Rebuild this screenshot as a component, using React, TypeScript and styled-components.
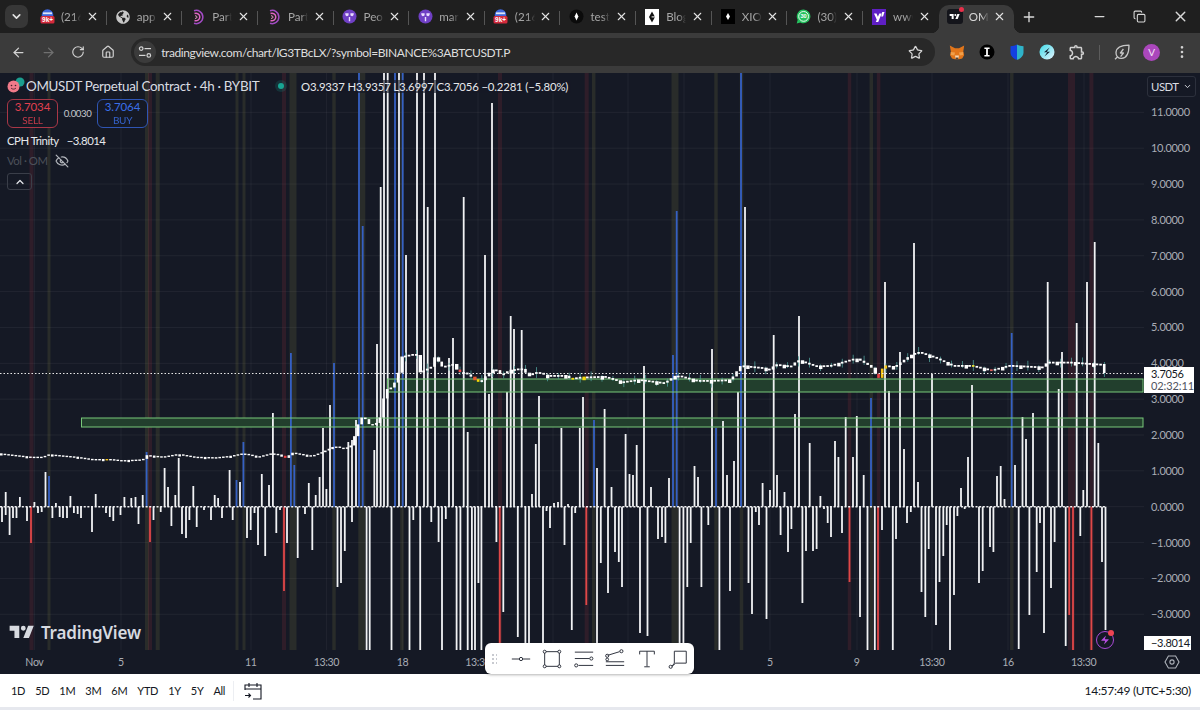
import React from "react";
import styled, { createGlobalStyle } from "styled-components";
import {
  ArrowLeft,
  ArrowRight,
  ChevronDown,
  ChevronUp,
  Copy,
  EllipsisVertical,
  EyeOff,
  House,
  Minus,
  Plus,
  RotateCw,
  Star,
  X,
  Zap,
} from "lucide-react";
import { FaGlobeAmericas } from "react-icons/fa";
import { MdOutlineExtension } from "react-icons/md";

type Bar = [number, number];

const WHITE = "#f1f2f4";
const BLUE = "#3560c4";
const RED = "#e04848";
const OLIVE = "rgba(112,112,62,0.22)";
const WINE = "rgba(120,44,56,0.26)";
const OFF = 60;
const BASE = 506.7;
const STEP = 35.85;

const upWhite: Bar[] = [
  [5.7, 492], [19.9, 497], [34.4, 502], [45.5, 472], [55.9, 503], [70.4, 496], [95.7, 494], [124.4, 497],
  [131.3, 498], [135.5, 497], [142.7, 495], [164.6, 468], [168, 487], [175.3, 495], [178.7, 458], [193.3, 486],
  [214.7, 495], [218.1, 498], [229.6, 470], [240, 482], [261.8, 474], [269, 485], [272.9, 413], [308.8, 483],
  [315.7, 495], [319.6, 477], [323, 428], [326.4, 489], [330, 405], [348.3, 442], [352, 440], [356, 420],
  [374.3, 450], [377, 344], [380.7, 187], [384, OFF], [387.7, OFF], [399, OFF], [406, 255], [417, OFF],
  [424, OFF], [427.7, 207], [435, OFF], [449, 358], [453, 338], [463.7, 197], [467.7, 432], [485, 255],
  [489, 394], [492, 103], [507, 392], [510.7, 316], [514, 329], [521.7, 330], [532, 494], [535.8, 444],
  [539, 396], [554, 503], [558, 502], [561.4, 428], [568, 504], [579.8, 428], [583, 397], [597, 468],
  [604.6, 409], [611.5, 487], [625.6, 434], [629.5, 474], [633, 475], [636.7, 445], [644, 366], [651, 487],
  [669, 478], [694.5, 466], [698, 477], [712, 349], [723, 421], [727, 475], [734, 461], [738, 392],
  [745, 207], [762.6, 483], [770, 490], [773.7, 335], [777, 475], [784.5, 492], [795, 414], [799, 316],
  [809.7, 443], [820.4, 496], [835, 441], [838.4, 457], [845.7, 417], [853, 457], [856.8, 416], [863.7, 475],
  [885, 282], [889, 391], [900, 352], [904, 449], [914, 243], [918, 482], [932, 374], [961, 488],
  [968, 457], [972, 385], [997, 476], [1000.7, 466], [1004.5, 499], [1015, 465], [1022.5, 417], [1026, 439],
  [1033, 413], [1047.7, 282], [1058.7, 389], [1062, 352], [1076.7, 323], [1083.3, 490], [1087, 282],
  [1094.7, 242], [1098.3, 443],
];

const upBlue: Bar[] = [
  [49, 476], [146.6, 452], [236.5, 480], [243.4, 442], [290.9, 353], [294.3, 465], [334, 363], [359, OFF],
  [362.7, 226], [395, OFF], [402.7, OFF], [594, 420], [673, 355], [676.7, 211], [716, 428], [741, OFF],
  [871, 398], [1011.7, 333],
];

const downWhite: Bar[] = [
  [2, 522], [5.7, 515], [9.6, 535], [13, 518], [16.5, 518], [27, 521], [38, 513], [41.7, 512],
  [52.4, 518], [59.7, 517], [63, 518], [67, 518], [73.9, 513], [77.7, 514], [81, 518], [92, 532],
  [106, 513], [109.8, 517], [113.3, 521], [120.5, 515], [138.5, 524], [153.5, 520], [160.7, 512], [171.4, 526],
  [182, 534], [186, 538], [189.4, 520], [196.7, 527], [204, 510], [211, 520], [222, 518], [232.7, 520],
  [247, 538], [250.7, 530], [254.5, 513], [258, 545], [265.2, 556], [276.3, 533], [280, 510], [287, 543],
  [297.7, 558], [305, 514], [312.3, 550], [337.5, 587], [341, 583], [344.8, 551], [352, 522], [366.6, 660],
  [369.7, 660], [391.5, 660], [409.5, 660], [413.3, 520], [420.2, 660], [431.3, 522], [438.6, 542], [442, 660],
  [445.8, 519], [456.6, 660], [460.4, 660], [467.7, 660], [471.9, 660], [475, 660], [478.4, 583], [481.4, 660],
  [496.4, 542], [503.3, 612], [517.8, 637], [525.4, 660], [529, 660], [543, 660], [546.5, 511], [550, 528],
  [564.5, 545], [571.8, 630], [575.2, 513], [597, 660], [600.8, 563], [608, 593], [615, 552], [618.8, 562],
  [622, 587], [640, 633], [647.5, 636], [658, 539], [662, 537], [665.4, 543], [679.6, 660], [683.4, 660],
  [687.3, 587], [690.7, 543], [701.4, 587], [708.3, 525], [719.4, 660], [730, 591], [748.5, 583], [752, 614],
  [755.8, 512], [759, 525], [766.5, 619], [780.6, 535], [788, 552], [791.4, 529], [802.4, 603], [806, 551],
  [813, 551], [816.6, 549], [824, 509], [827.7, 523], [831, 537], [842, 533], [860, 617], [867.5, 660],
  [874.8, 660], [882, 530], [892.8, 660], [896, 539], [907, 523], [910.8, 512], [921.5, 592], [925.3, 617],
  [928.7, 549], [936, 625], [939.5, 582], [943.3, 556], [946.7, 525], [950, 660], [954, 595], [957.4, 516],
  [964.7, 509], [979, 583], [982.7, 571], [990, 547], [993.4, 552], [1018.7, 649], [1029.4, 615], [1036.7, 572],
  [1040, 523], [1044, 633], [1051, 588], [1054.6, 542], [1065.7, 646], [1080.3, 536], [1102, 562], [1105.5, 630],
];

const downRed: Bar[] = [
  [31, 543], [150, 542], [284, 591], [499.8, 660], [586.3, 605], [849.5, 582], [878, 660], [1069.2, 615],
  [1073, 660], [1091.4, 660],
];

const bands: [number, number, string][] = [
  [31.5, 4, WINE], [49, 3, OLIVE], [147, 4, OLIVE], [150, 4, WINE], [157.7, 4, OLIVE], [237, 3, OLIVE],
  [244, 3, OLIVE], [284, 4, WINE], [293, 7, OLIVE], [334, 3.5, OLIVE], [361.8, 7, OLIVE], [402, 3.5, OLIVE],
  [500, 4, WINE], [586.7, 4, WINE], [593.7, 3.5, OLIVE], [675, 7, OLIVE], [716, 3.5, OLIVE], [741.5, 3.5, OLIVE],
  [849.5, 3.5, WINE], [871.3, 3.5, OLIVE], [878.6, 3.5, WINE], [1011.8, 3.5, OLIVE], [1071.5, 7, WINE],
  [1091.4, 4, WINE],
];

const gridX = [34.4, 121, 251, 326.4, 402.6, 478, 553, 628, 684, 770, 857, 932, 1008, 1084];
const priceTicks = ["11.0000", "10.0000", "9.0000", "8.0000", "7.0000", "6.0000", "5.0000", "4.0000", "3.0000", "2.0000", "1.0000", "0.0000", "−1.0000", "−2.0000", "−3.0000"];
const timeTicks: [string, number][] = [["Nov", 34.4], ["5", 121], ["11", 250.7], ["13:30", 326.4], ["18", 402.6], ["13:30", 478], ["5", 770], ["9", 856.6], ["13:30", 932], ["16", 1008], ["13:30", 1083.8]];
const ranges = ["1D", "5D", "1M", "3M", "6M", "YTD", "1Y", "5Y", "All"];

const path: Bar[] = [
  [0, 453.3], [15, 455], [30.6, 456.7], [46, 456.7], [49.8, 454.3], [76.5, 456.7], [92, 459], [111, 459], [122.5, 460.3],
  [145.4, 459.3], [147.3, 455], [164.6, 456.7], [180, 454], [195, 456.7], [218, 457.3], [233.4, 455.7], [245, 453.3],
  [260, 456.7], [273.6, 453.3], [283, 455], [287, 458.3], [294.7, 452.7], [313.8, 456], [325.3, 451.7], [336.8, 446],
  [346.3, 449], [354, 445], [361.7, 420], [365.5, 416], [371, 424], [377, 425.3], [382.7, 416.7], [387.3, 390],
  [395, 386.7], [400, 375], [403.3, 356.7], [410, 355], [418.3, 353.3], [421.7, 372.7], [433.3, 366.7], [437.3, 356],
  [443.3, 366.7], [455, 364], [460, 371.7], [466.7, 372.7], [473.3, 376.7], [481.7, 382.7], [490, 374], [496.7, 368],
  [503.3, 375], [511.7, 370], [523.3, 368], [530, 375], [540, 371.7], [546.7, 375], [566.7, 375], [571.7, 378.3],
  [583.3, 376.7], [605, 376], [623.3, 381.7], [640, 379.3], [666.7, 382.7], [678.3, 375], [696.7, 380], [713.3, 380],
  [733.3, 379.3], [743.3, 365], [750, 366], [763, 367.3], [773.3, 370], [776.7, 364], [793, 366], [800, 360],
  [816.7, 365.7], [833, 365], [858, 358], [873, 366.7], [878, 375], [883, 380], [885, 365], [896.7, 366.7], [913, 355],
  [920, 351.7], [935, 356.7], [953, 365], [971.7, 365], [993, 370], [1011.7, 365], [1045, 366.7], [1050, 361.7],
  [1070, 361.7], [1093, 363.3], [1103, 364], [1106, 373],
];

const candleColors: [number, number, string][] = [
  [106, 110, "#f5c518"], [282, 286, "#ef4444"], [458, 463, "#ef4444"], [472, 476, "#e8592f"], [477, 481, "#f5d90a"],
  [570, 574, "#f5d90a"], [581, 586, "#f5d90a"], [876, 880, "#ef4444"], [882, 887, "#f5c518"], [970, 974, "#e6e03a"],
  [991, 995, "#e0605c"],
];

const priceAt = (x: number) => {
  for (let i = 1; i < path.length; i++) {
    if (x <= path[i][0]) {
      const [x0, y0] = path[i - 1];
      const [x1, y1] = path[i];
      return y0 + ((y1 - y0) * (x - x0)) / (x1 - x0 || 1);
    }
  }
  return path[path.length - 1][1];
};

const Candles = () => {
  const items = [];
  const gap = 3.64;
  for (let i = 0; i * gap < 1104; i++) {
    const x = i * gap;
    const a = priceAt(x);
    const b = priceAt(x + gap);
    const top = Math.min(a, b);
    const late = x > 385;
    const minTall = late ? (i % 5 === 0 ? 3.6 : 1.8) : i % 7 === 0 ? 2.2 : 1.4;
    const tall = Math.max(Math.abs(a - b), minTall);
    const tint = candleColors.find((c) => x + 1.5 >= c[0] && x + 1.5 <= c[1]);
    const hasWick = late && i % 3 === 0;
    items.push(
      <g key={i}>
        {hasWick && <rect x={x + 1} y={top - ((i * 37) % 5) - 1} width={0.8} height={tall + ((i * 37) % 5) + 2 + (i % 4)} fill="#4f9d98" />}
        <rect x={x} y={top} width={late && i % 5 === 0 ? 3.4 : 2.6} height={tall} fill={tint ? tint[2] : "#ffffff"} />
      </g>
    );
  }
  return <g>{items}</g>;
};

const Bars = ({ list, up, color }: { list: Bar[]; up: boolean; color: string }) => (
  <g>
    {list.map(([x, end]) => (
      <rect key={x} x={x - 0.9} y={up ? end : BASE} width={1.8} height={up ? BASE - end : end - BASE} fill={color} />
    ))}
  </g>
);

const Chart = () => (
  <ChartSvg viewBox="0 73 1144 577" width="1144" height="577">
    {priceTicks.map((_, i) => (
      <line key={i} x1="0" x2="1144" y1={BASE - STEP * (11 - i)} y2={BASE - STEP * (11 - i)} stroke="rgba(255,255,255,0.055)" />
    ))}
    {gridX.map((x) => (
      <line key={x} x1={x} x2={x} y1="73" y2="650" stroke="rgba(255,255,255,0.05)" />
    ))}
    {bands.map(([x, w, c]) => (
      <rect key={x + c} x={x - w / 2} y="73" width={w} height="577" fill={c} />
    ))}
    <rect x="387" y="379" width="756" height="13" fill="#223f2d" />
    <rect x="81.5" y="418" width="1061.5" height="9" fill="#223f2d" />
    <Bars list={upWhite} up color={WHITE} />
    <Bars list={upBlue} up color={BLUE} />
    <Bars list={downWhite} up={false} color={WHITE} />
    <Bars list={downRed} up={false} color={RED} />
    <line x1="0" x2="1105" y1={BASE} y2={BASE} stroke={WHITE} strokeWidth="1.6" strokeDasharray="2 1.64" />
    <rect x="387.5" y="379" width="755.5" height="13" fill="none" stroke="#79c97a" />
    <rect x="81.5" y="418" width="1061.5" height="9" fill="none" stroke="#79c97a" />
    <Candles />
    <line x1="0" x2="1144" y1="373.5" y2="373.5" stroke="#e8e8e8" strokeDasharray="1.5 2" />
  </ChartSvg>
);

const TvMark = ({ color, size }: { color: string; size: number }) => (
  <svg width={size} height={(size * 28) / 36} viewBox="0 0 36 28" fill={color}>
    <path d="M14 6H2v6h6v9h6V6Zm12 15h-7l6-15h7l-6 15Zm-7-9a3 3 0 1 0 0-6 3 3 0 0 0 0 6Z" />
  </svg>
);

const Favicon = ({ kind }: { kind: string }) => {
  switch (kind) {
    case "mail":
      return (
        <svg width="15" height="15" viewBox="0 0 15 15">
          <circle cx="7.5" cy="6" r="5.8" fill="#3f67dc" />
          <rect x="3" y="3.4" width="9" height="1.8" fill="#dfe6f7" />
          <rect x="0.5" y="7" width="14" height="7.5" rx="1.5" fill="#d42a3c" />
          <FavText x="7.5" y="13" fontSize="6.4">9k+</FavText>
        </svg>
      );
    case "globe":
      return <FaGlobeAmericas size={14} color="#c7c7c7" />;
    case "moon":
      return (
        <svg width="16" height="16" viewBox="0 0 16 16" fill="none">
          <path d="M4 1.8A6.6 6.6 0 1 1 4 14.2" stroke="#a24bc4" strokeWidth="1.5" />
          <path d="M4.5 4.5A3.8 3.8 0 1 1 4.5 11.5" stroke="#e067c4" strokeWidth="1.5" />
          <path d="M5 7A1.3 1.3 0 1 1 5 9.2" stroke="#f09ad0" strokeWidth="1" />
        </svg>
      );
    case "trio":
      return (
        <svg width="15" height="15" viewBox="0 0 15 15">
          <circle cx="7.5" cy="7.5" r="7" fill="#6f3fc4" />
          <path d="M3.2 4.2h3.4v1.6c0 1-.9 1.4-1.7 1.4S3.2 6 3.2 4.2ZM11.8 4.2H8.4v1.6c0 1 .9 1.4 1.7 1.4s1.7-1.2 1.7-3ZM6.8 8h1.4v4.2H6.8Z" fill="#eadcff" />
        </svg>
      );
    case "dot":
      return (
        <svg width="15" height="15" viewBox="0 0 15 15">
          <circle cx="7.5" cy="7.5" r="7" fill="#0b0b0b" />
          <path d="M7.5 3.4 9.4 7.5 7.5 11.6 5.6 7.5Z" fill="#fff" />
        </svg>
      );
    case "paper":
      return (
        <svg width="14" height="16" viewBox="0 0 14 16">
          <rect width="14" height="16" fill="#fff" />
          <path d="M7 2.5 10 8l-3 5.5L4 8Z" fill="#111" />
          <rect x="6.6" y="7.4" width="4" height="1" fill="#fff" />
        </svg>
      );
    case "ink":
      return (
        <svg width="14" height="15" viewBox="0 0 14 15">
          <rect width="14" height="15" fill="#000" />
          <path d="M7 4 9 7.5 7 11 5 7.5Z" fill="#fff" />
        </svg>
      );
    case "chat":
      return (
        <svg width="15" height="15" viewBox="0 0 15 15">
          <path d="M7.6.6a6.8 6.8 0 0 0-5.9 10.2L.7 14.4l3.7-1A6.8 6.8 0 1 0 7.6.6Z" fill="#25c25f" />
          <circle cx="7.6" cy="7.4" r="4.9" fill="none" stroke="#fff" strokeWidth="0.9" />
          <FavText x="7.6" y="9.4" fontSize="5.6">30</FavText>
        </svg>
      );
    case "yahoo":
      return (
        <svg width="14" height="16" viewBox="0 0 14 16">
          <rect width="14" height="16" fill="#5f1fc4" />
          <path d="M2 4.6h2.5l1.4 3.2 1.4-3.2h2.4L6.2 13H3.8l1-2.3Z" fill="#fff" />
          <path d="M10.2 3h2.3l-1.5 4.4H9.2Z" fill="#fff" />
        </svg>
      );
    default:
      return (
        <TvFavicon>
          <TvMark color="#fff" size={12} />
          <TvAlert />
        </TvFavicon>
      );
  }
};

const tabs = [
  { kind: "mail", title: "(216" },
  { kind: "globe", title: "app" },
  { kind: "moon", title: "Part" },
  { kind: "moon", title: "Part" },
  { kind: "trio", title: "Peo" },
  { kind: "trio", title: "mar" },
  { kind: "mail", title: "(216" },
  { kind: "dot", title: "test" },
  { kind: "paper", title: "Blog" },
  { kind: "ink", title: "XIO" },
  { kind: "chat", title: "(30)" },
  { kind: "yahoo", title: "www" },
  { kind: "tv", title: "OM" },
];

const TuneIcon = () => (
  <svg width="14" height="14" viewBox="0 0 14 14" fill="none" stroke="#d6d6d6" strokeWidth="1.2">
    <circle cx="3.2" cy="3.6" r="1.8" />
    <path d="M6.5 3.6H13" />
    <circle cx="10.8" cy="10.4" r="1.8" />
    <path d="M1 10.4h6.5" />
  </svg>
);

const FoxIcon = () => (
  <svg width="16" height="15" viewBox="0 0 16 15">
    <path d="M.8.6 6 3.2h4L15.2.6l-.9 6 .9 3.4-2 3.4-3 .9H6l-3-.9-2-3.4.9-3.4Z" fill="#e2761b" />
    <path d="M1.8 7 6 7.6l-.6 3-3.4-.6ZM14.2 7 10 7.6l.6 3 3.4-.6Z" fill="#f0a04b" />
    <path d="M6 10.6h4l-.6 3H6.6Z" fill="#f6d9b8" />
    <path d="M6.8 12.6h2.4v1.2H6.8Z" fill="#2b2b2b" />
  </svg>
);

const BeamIcon = () => (
  <svg width="16" height="16" viewBox="0 0 16 16">
    <circle cx="8" cy="8" r="7.5" fill="#000" />
    <path d="M5.4 3.4h5.2v1.5H8.9v6.2h1.7v1.5H5.4v-1.5h1.7V4.9H5.4Z" fill="#fff" />
  </svg>
);

const ShieldIcon = () => (
  <svg width="14" height="16" viewBox="0 0 14 16">
    <path d="M7 .5c2 1.2 4 1.6 6.5 1.7v6.2C13.5 12 10.5 14.6 7 15.8Z" fill="#2fb3c9" />
    <path d="M7 .5C5 1.7 3 2.1.5 2.2v6.2C.5 12 3.5 14.6 7 15.8Z" fill="#1440e0" />
  </svg>
);

const SwirlIcon = () => (
  <svg width="16" height="16" viewBox="0 0 16 16">
    <defs>
      <linearGradient id="swirl" x1="0" y1="0" x2="1" y2="1">
        <stop offset="0" stopColor="#3ddbe8" />
        <stop offset="1" stopColor="#e8f4ff" />
      </linearGradient>
    </defs>
    <circle cx="8" cy="8" r="7.5" fill="url(#swirl)" />
    <path d="M10.6 3.4 5 8.2h3.2l-2.8 4.4 5.6-4.8H7.8Z" fill="#102030" />
  </svg>
);

const LeafIcon = () => (
  <svg width="18" height="18" viewBox="0 0 18 18" fill="none" stroke="#c7c7c7" strokeWidth="1.3" strokeLinejoin="round">
    <path d="M16 2.2C9 2.2 3.4 3.6 3 9.6c-.1 2 .6 3.4 1.6 4.4 1 1 2.4 1.5 4 1.4 5.8-.4 7.4-6.4 7.4-13.2Z" />
    <path d="M10.4 6 7.4 10h3l-2.8 3.6" />
    <path d="M4.4 14 2 16.2" />
  </svg>
);

const LineTool = () => (
  <ToolSvg viewBox="0 0 24 24">
    <path d="M2 12h8.2M13.8 12H22" />
    <circle cx="12" cy="12" r="1.8" />
  </ToolSvg>
);

const RectTool = () => (
  <ToolSvg viewBox="0 0 24 24">
    <path d="M4 5.5v13M20 5.5v13M5.5 4h13M5.5 20h13" />
    <circle cx="4" cy="4" r="1.6" />
    <circle cx="20" cy="4" r="1.6" />
    <circle cx="4" cy="20" r="1.6" />
    <circle cx="20" cy="20" r="1.6" />
  </ToolSvg>
);

const ChannelTool = () => (
  <ToolSvg viewBox="0 0 24 24">
    <path d="M2 4.5h20M2 11.5h16M6 19h16" />
    <circle cx="20" cy="11.5" r="1.7" />
    <circle cx="3.5" cy="19" r="1.7" />
  </ToolSvg>
);

const FibTool = () => (
  <ToolSvg viewBox="0 0 24 24">
    <path d="M4 8 17 4M2 15h20M2 19h20" />
    <circle cx="19" cy="3.5" r="1.7" />
    <circle cx="3.5" cy="8.5" r="1.7" />
    <circle cx="3.5" cy="12.5" r="1.5" />
  </ToolSvg>
);

const TextTool = () => (
  <ToolSvg viewBox="0 0 24 24">
    <path d="M4 7V3.5h16V7M12 3.5V20M9 20.5h6" />
  </ToolSvg>
);

const NoteTool = () => (
  <ToolSvg viewBox="0 0 24 24">
    <path d="M8 3.5h13v13H9.5L5.5 20 8 16.5V3.5Z" />
    <circle cx="4" cy="20.5" r="1.7" />
  </ToolSvg>
);

const CalendarIcon = () => (
  <svg width="18" height="20" viewBox="0 0 18 20" fill="none" stroke="#131722" strokeWidth="1.1">
    <path d="M1 9V4h16v14H9" />
    <path d="M1 8h16M5 2v4M13 2v4M1 14.5h5.5M4.5 12.5l2 2-2 2" />
  </svg>
);

const SettingsIcon = () => (
  <svg width="16" height="16" viewBox="0 0 16 16" fill="none" stroke="#aeb2ba" strokeWidth="1.1">
    <path d="M4.4 2h7.2L15 8l-3.4 6H4.4L1 8Z" />
    <circle cx="8" cy="8" r="2.1" />
  </svg>
);

const App: React.FC = () => {
  return (
    <Page>
      <GlobalStyle />
      <TabStrip>
        <TabMenuBtn>
          <ChevronDown size={13} strokeWidth={3} />
        </TabMenuBtn>
        {tabs.map((tab, index) => (
          <Tab key={index} $active={index === 12} $divider={index < 11}>
            <FaviconSlot>
              <Favicon kind={tab.kind} />
            </FaviconSlot>
            <TabTitle>{tab.title}</TabTitle>
            <TabClose>
              <X size={13} strokeWidth={2} />
            </TabClose>
          </Tab>
        ))}
        <NewTab>
          <Plus size={16} />
        </NewTab>
        <WindowControls>
          <Minus size={15} />
          <Copy size={13} />
          <X size={17} />
        </WindowControls>
      </TabStrip>

      <Toolbar>
        <ToolBtn>
          <ArrowLeft size={15} />
        </ToolBtn>
        <ToolBtn $dim>
          <ArrowRight size={15} />
        </ToolBtn>
        <ToolBtn>
          <RotateCw size={14} />
        </ToolBtn>
        <ToolBtn>
          <House size={14} />
        </ToolBtn>
        <Omnibox>
          <TuneBadge>
            <TuneIcon />
          </TuneBadge>
          <UrlText>tradingview.com/chart/lG3TBcLX/?symbol=BINANCE%3ABTCUSDT.P</UrlText>
          <Star size={15} color="#d6d6d6" />
        </Omnibox>
        <ToolBtn><FoxIcon /></ToolBtn>
        <ToolBtn><BeamIcon /></ToolBtn>
        <ToolBtn><ShieldIcon /></ToolBtn>
        <ToolBtn><SwirlIcon /></ToolBtn>
        <ToolBtn><MdOutlineExtension size={18} /></ToolBtn>
        <ToolDivider />
        <ToolBtn><LeafIcon /></ToolBtn>
        <ToolBtn><Avatar>V</Avatar></ToolBtn>
        <ToolBtn><EllipsisVertical size={16} /></ToolBtn>
      </Toolbar>

      <ChartArea>
        <ChartBody>
          <ChartPane>
            <Chart />
            <Legend>
              <LegendTitle>
                <SymbolBadge>
                  <svg width="18" height="16" viewBox="0 0 18 16">
                    <circle cx="13" cy="5" r="4.5" fill="#1b9e8f" />
                    <circle cx="6.5" cy="9.5" r="6" fill="#f07a8a" />
                    <circle cx="4.5" cy="8.5" r="0.8" fill="#40202a" />
                    <circle cx="8.5" cy="8.5" r="0.8" fill="#40202a" />
                    <path d="M4 11c1.2 1.5 3.8 1.5 5 0" stroke="#40202a" fill="none" strokeWidth="0.8" />
                  </svg>
                </SymbolBadge>
                <SymbolName>OMUSDT Perpetual Contract · 4h · BYBIT</SymbolName>
                <StatusDot />
                <Ohlc>O3.9337 H3.9357 L3.6997 C3.7056 −0.2281 (−5.80%)</Ohlc>
              </LegendTitle>
              <TradeRow>
                <TradeBtn $color="#e0404f" $border="#a93747">
                  <b>3.7034</b>
                  <span>SELL</span>
                </TradeBtn>
                <Spread>0.0030</Spread>
                <TradeBtn $color="#3a6fe8" $border="#2f55b4">
                  <b>3.7064</b>
                  <span>BUY</span>
                </TradeBtn>
              </TradeRow>
              <IndicatorRow>
                <span>CPH Trinity</span>
                <span>−3.8014</span>
              </IndicatorRow>
              <VolumeRow>
                <span>Vol · OM</span>
                <EyeOff size={14} color="#b4b7bd" />
              </VolumeRow>
              <CollapseBtn>
                <ChevronUp size={12} strokeWidth={2.4} />
              </CollapseBtn>
            </Legend>
            <Watermark>
              <TvMark color="#d7dae0" size={29} />
              <span>TradingView</span>
            </Watermark>
            <AlertBadge>
              <Zap size={10} fill="#b44ddd" strokeWidth={0} />
            </AlertBadge>
          </ChartPane>
          <PriceAxis>
            <CurrencyBtn>
              USDT
              <ChevronDown size={9} strokeWidth={2.5} />
            </CurrencyBtn>
            <PriceTicks>
              {priceTicks.map((tick) => (
                <PriceTick key={tick}>{tick}</PriceTick>
              ))}
            </PriceTicks>
            <LastPrice>
              <b>3.7056</b>
              <span>02:32:11</span>
            </LastPrice>
            <IndicatorPrice>−3.8014</IndicatorPrice>
          </PriceAxis>
        </ChartBody>
        <TimeRow>
          <TimeAxis>
            {timeTicks.map(([label, x], i) => (
              <TimeCell key={i} style={{ width: (timeTicks[i + 1]?.[1] ?? 1144) - x }}>
                <span>{label}</span>
              </TimeCell>
            ))}
          </TimeAxis>
          <AxisCorner>
            <SettingsIcon />
          </AxisCorner>
        </TimeRow>
        <DrawBar>
          <DragDots />
          <DrawTool><LineTool /></DrawTool>
          <DrawTool><RectTool /></DrawTool>
          <DrawTool><ChannelTool /></DrawTool>
          <DrawTool><FibTool /></DrawTool>
          <DrawTool><TextTool /></DrawTool>
          <DrawTool><NoteTool /></DrawTool>
        </DrawBar>
      </ChartArea>

      <BottomBar>
        <RangeList>
          {ranges.map((range) => (
            <RangeItem key={range}>{range}</RangeItem>
          ))}
        </RangeList>
        <RangeDivider />
        <CalendarBtn>
          <CalendarIcon />
        </CalendarBtn>
        <Clock>14:57:49 (UTC+5:30)</Clock>
      </BottomBar>
      <PageEdge />
    </Page>
  );
};

export default App;

const GlobalStyle = createGlobalStyle`
  html, body {
    margin: 0;
    padding: 0;
    background: #ffffff;
  }
  * {
    box-sizing: border-box;
  }
`;

const Page = styled.div`
  width: 1200px;
  height: 710px;
  display: flex;
  flex-direction: column;
  overflow: hidden;
  font-family: Lato, "Noto Sans", sans-serif;
`;

const TabStrip = styled.div`
  height: 33px;
  display: flex;
  align-items: flex-end;
  padding-left: 5px;
  background: #1f1f1f;
  color: #c7c7c7;
`;

const TabMenuBtn = styled.div`
  width: 23px;
  height: 23px;
  margin: 0 3px 5px 0;
  border-radius: 7px;
  background: #373737;
  display: flex;
  align-items: center;
  justify-content: center;
  color: #e3e3e3;
`;

const Tab = styled.div<{ $active: boolean; $divider: boolean }>`
  position: relative;
  width: 75.65px;
  height: 28px;
  display: flex;
  align-items: center;
  padding: 0 8px 5px 8px;
  border-radius: 10px 10px 0 0;
  background: ${(p) => (p.$active ? "#3b3b3b" : "transparent")};
  color: ${(p) => (p.$active ? "#d8d8d8" : "#a6a6a6")};
  &::after {
    content: "";
    position: absolute;
    right: 0;
    top: 6px;
    width: 1px;
    height: 14px;
    background: ${(p) => (p.$divider ? "#555555" : "transparent")};
  }
  ${(p) =>
    p.$active &&
    `&::before {
      content: "";
      position: absolute;
      left: -8px;
      right: -8px;
      bottom: 0;
      height: 8px;
      background:
        radial-gradient(circle at 0 0, #1f1f1f 8px, #3b3b3b 8.5px) left / 8px 8px no-repeat,
        radial-gradient(circle at 100% 0, #1f1f1f 8px, #3b3b3b 8.5px) right / 8px 8px no-repeat;
    }`}
`;

const FaviconSlot = styled.div`
  position: relative;
  width: 16px;
  height: 16px;
  flex: none;
  display: flex;
  align-items: center;
  justify-content: center;
`;

const FavText = styled.text`
  fill: #ffffff;
  font-family: "Liberation Sans", sans-serif;
  font-weight: 700;
  text-anchor: middle;
`;

const TvFavicon = styled.div`
  position: relative;
  width: 16px;
  height: 15px;
  border-radius: 3px;
  background: #14151b;
  display: flex;
  align-items: center;
  justify-content: center;
`;

const TvAlert = styled.div`
  position: absolute;
  top: -2px;
  right: -1px;
  width: 5px;
  height: 5px;
  border-radius: 50%;
  background: #e8304a;
`;

const TabTitle = styled.div`
  width: 20px;
  margin-left: 6px;
  overflow: hidden;
  white-space: nowrap;
  font-size: 11.6px;
  line-height: 16px;
  -webkit-mask-image: linear-gradient(90deg, #000 62%, transparent);
  mask-image: linear-gradient(90deg, #000 62%, transparent);
`;

const TabClose = styled.div`
  margin-left: auto;
  display: flex;
  color: #e3e3e3;
`;

const NewTab = styled.div`
  width: 16px;
  margin: 0 0 8px 7px;
  display: flex;
  color: #dcdcdc;
`;

const WindowControls = styled.div`
  width: 97px;
  margin: 0 11px 8px auto;
  display: flex;
  align-items: center;
  justify-content: space-between;
  color: #d8d8d8;
`;

const Toolbar = styled.div`
  height: 40px;
  display: flex;
  align-items: center;
  padding: 0 3.3px 2px 3px;
  background: #3b3b3b;
`;

const ToolBtn = styled.div<{ $dim?: boolean }>`
  width: 30px;
  height: 28px;
  flex: none;
  display: flex;
  align-items: center;
  justify-content: center;
  color: ${(p) => (p.$dim ? "#707070" : "#d2d2d2")};
`;

const ToolDivider = styled.div`
  width: 1px;
  height: 15px;
  margin: 0 7px;
  background: #5c5c5c;
`;

const Avatar = styled.div`
  width: 17px;
  height: 17px;
  border-radius: 50%;
  background: #ab47bc;
  color: #f4e6f7;
  font-size: 10px;
  line-height: 17px;
  text-align: center;
`;

const Omnibox = styled.div`
  flex: 1;
  height: 28px;
  margin: 0 6.7px 0 7.7px;
  padding: 0 12px 0 3px;
  display: flex;
  align-items: center;
  border-radius: 14px;
  background: #282828;
`;

const TuneBadge = styled.div`
  width: 22px;
  height: 22px;
  border-radius: 50%;
  background: #3b3b3b;
  display: flex;
  align-items: center;
  justify-content: center;
`;

const UrlText = styled.div`
  flex: 1;
  margin-left: 5.5px;
  color: #dedede;
  font-size: 12px;
  letter-spacing: -0.4px;
  white-space: nowrap;
`;

const ChartArea = styled.div`
  position: relative;
  height: 601px;
  display: flex;
  flex-direction: column;
  background: #151925;
`;

const ChartBody = styled.div`
  height: 577px;
  display: flex;
`;

const ChartPane = styled.div`
  position: relative;
  width: 1144px;
  height: 577px;
  overflow: hidden;
`;

const ChartSvg = styled.svg`
  display: block;
`;

const Legend = styled.div`
  position: absolute;
  left: 7px;
  top: 5px;
  display: flex;
  flex-direction: column;
  align-items: flex-start;
  color: #e6e8ec;
  font-size: 12px;
`;

const LegendTitle = styled.div`
  height: 16px;
  display: flex;
  align-items: center;
`;

const SymbolBadge = styled.div`
  width: 19px;
  display: flex;
  margin-bottom: 2px;
`;

const SymbolName = styled.div`
  width: 234px;
  font-size: 13.4px;
  letter-spacing: -0.3px;
  color: #d9dce2;
  white-space: nowrap;
`;

const StatusDot = styled.div`
  width: 6px;
  height: 6px;
  margin-left: 18px;
  border-radius: 50%;
  background: #18a594;
  box-shadow: 0 0 0 3px rgba(24, 165, 148, 0.18);
`;

const Ohlc = styled.div`
  margin-left: 14px;
  padding: 0 3px;
  white-space: nowrap;
  font-size: 11.4px;
  letter-spacing: -0.17px;
  color: #e6e8ec;
  background: rgba(21, 25, 37, 0.62);
`;

const TradeRow = styled.div`
  display: flex;
  align-items: center;
  margin-top: 5px;
`;

const TradeBtn = styled.div<{ $color: string; $border: string }>`
  width: 51px;
  height: 29px;
  display: flex;
  flex-direction: column;
  align-items: center;
  justify-content: center;
  border: 1px solid ${(p) => p.$border};
  border-radius: 6px;
  color: ${(p) => p.$color};
  font-size: 10px;
  line-height: 12.5px;
  letter-spacing: -0.3px;
  background: #151925;
  b {
    font-weight: 400;
    font-size: 11.5px;
    letter-spacing: -0.1px;
  }
  span {
    opacity: 0.85;
  }
`;

const Spread = styled.div`
  width: 39px;
  text-align: center;
  font-size: 9.6px;
  letter-spacing: -0.4px;
  color: #c5c8ce;
`;

const IndicatorRow = styled.div`
  margin-top: 5px;
  display: flex;
  gap: 8px;
  font-size: 11.4px;
  letter-spacing: -0.5px;
  line-height: 16px;
  white-space: nowrap;
`;

const VolumeRow = styled.div`
  margin-top: 4px;
  display: flex;
  align-items: center;
  gap: 7px;
  font-size: 11.4px;
  letter-spacing: -0.5px;
  line-height: 16px;
  color: #4c5059;
  white-space: nowrap;
`;

const CollapseBtn = styled.div`
  width: 25px;
  height: 17px;
  margin-top: 4px;
  display: flex;
  align-items: center;
  justify-content: center;
  border: 1px solid #3a3e49;
  border-radius: 3px;
  color: #e6e8ec;
`;

const Watermark = styled.div`
  position: absolute;
  left: 8px;
  top: 548px;
  display: flex;
  align-items: center;
  gap: 4px;
  color: #d7dae0;
  font-family: "Noto Sans", sans-serif;
  font-size: 17px;
  font-weight: 600;
  letter-spacing: -0.2px;
`;

const AlertBadge = styled.div`
  position: absolute;
  left: 1096px;
  top: 558px;
  width: 18px;
  height: 18px;
  display: flex;
  align-items: center;
  justify-content: center;
  border: 1.4px solid #a94ad6;
  border-radius: 50%;
  &::after {
    content: "";
    position: absolute;
    right: -1px;
    top: -2px;
    width: 6px;
    height: 6px;
    border-radius: 50%;
    background: #ef4452;
  }
`;

const PriceAxis = styled.div`
  position: relative;
  width: 56px;
  overflow: hidden;
  padding: 21.4px 0 0 7px;
`;

const CurrencyBtn = styled.div`
  position: absolute;
  left: 3px;
  top: 3px;
  width: 49px;
  height: 21px;
  padding: 0 3px;
  display: flex;
  align-items: center;
  justify-content: space-between;
  border: 1px solid #2c303c;
  border-radius: 3px;
  background: #151925;
  color: #d9dce2;
  font-size: 11.4px;
  letter-spacing: -0.5px;
`;

const PriceTicks = styled.div`
  display: flex;
  flex-direction: column;
`;

const PriceTick = styled.div`
  height: 35.85px;
  line-height: 35.85px;
  font-size: 11px;
  letter-spacing: -0.3px;
  color: #a9adb5;
  white-space: nowrap;
`;

const LastPrice = styled.div`
  position: absolute;
  left: 0;
  top: 294px;
  width: 50px;
  height: 26px;
  padding-left: 7px;
  display: flex;
  flex-direction: column;
  justify-content: center;
  background: #ffffff;
  color: #131722;
  font-size: 11px;
  letter-spacing: -0.3px;
  line-height: 12.5px;
  b {
    font-weight: 400;
  }
  span {
    color: #50535e;
    letter-spacing: -0.1px;
  }
`;

const IndicatorPrice = styled.div`
  position: absolute;
  left: 0;
  top: 563px;
  width: 46.5px;
  height: 14px;
  padding-left: 7px;
  background: #ffffff;
  color: #131722;
  font-size: 11px;
  letter-spacing: -0.3px;
  line-height: 14px;
`;

const TimeRow = styled.div`
  height: 24px;
  display: flex;
`;

const TimeAxis = styled.div`
  width: 1144px;
  padding-left: 34.4px;
  display: flex;
  align-items: center;
  overflow: hidden;
`;

const TimeCell = styled.div`
  flex: none;
  font-size: 10.6px;
  letter-spacing: -0.4px;
  color: #a9adb5;
  white-space: nowrap;
  span {
    display: inline-block;
    transform: translateX(-50%);
  }
`;

const AxisCorner = styled.div`
  width: 56px;
  padding-left: 20px;
  display: flex;
  align-items: center;
`;

const DrawBar = styled.div`
  position: absolute;
  left: 485px;
  bottom: 0;
  width: 209px;
  height: 31px;
  padding-left: 20px;
  display: flex;
  align-items: center;
  border-radius: 6px;
  background: #ffffff;
  box-shadow: 0 1px 3px rgba(0, 0, 0, 0.3);
`;

const DragDots = styled.div`
  position: absolute;
  left: 6px;
  top: 10px;
  width: 6px;
  height: 11px;
  background: radial-gradient(circle, #c8cad0 1px, transparent 1.3px) 0 0 / 4px 4px;
`;

const DrawTool = styled.div`
  width: 31.6px;
  display: flex;
  align-items: center;
  justify-content: center;
`;

const ToolSvg = styled.svg`
  width: 22px;
  height: 22px;
  fill: none;
  stroke: #2a2e39;
  stroke-width: 1.05;
`;

const BottomBar = styled.div`
  height: 33px;
  padding-left: 11px;
  display: flex;
  align-items: center;
  background: #ffffff;
  color: #131722;
  font-size: 11px;
  letter-spacing: -0.3px;
`;

const RangeList = styled.div`
  display: flex;
  gap: 10px;
`;

const RangeItem = styled.div`
  white-space: nowrap;
`;

const RangeDivider = styled.div`
  width: 1px;
  height: 20px;
  margin-left: 8px;
  background: #eceef2;
`;

const CalendarBtn = styled.div`
  margin-left: 10px;
  display: flex;
`;

const Clock = styled.div`
  margin-left: auto;
  padding-right: 9px;
  font-size: 12px;
  letter-spacing: -0.27px;
  white-space: nowrap;
`;

const PageEdge = styled.div`
  height: 3px;
  background: #e6e8ee;
`;
